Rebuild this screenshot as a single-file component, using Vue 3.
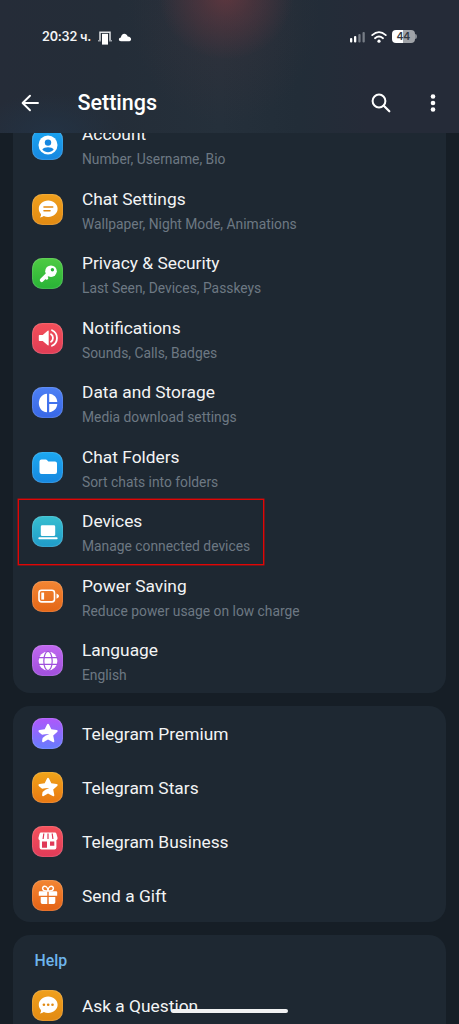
<script setup>
const settings = [
  { icon: 'account', title: 'Account', sub: 'Number, Username, Bio', c: ['#1ba5f0', '#1787e0'] },
  { icon: 'chat', title: 'Chat Settings', sub: 'Wallpaper, Night Mode, Animations', c: ['#f0a01d', '#e28a12'] },
  { icon: 'key', title: 'Privacy & Security', sub: 'Last Seen, Devices, Passkeys', c: ['#4fcb43', '#28b336'] },
  { icon: 'sound', title: 'Notifications', sub: 'Sounds, Calls, Badges', c: ['#f4505a', '#e03c55'] },
  { icon: 'pie', title: 'Data and Storage', sub: 'Media download settings', c: ['#4d80f4', '#3867e6'] },
  { icon: 'folder', title: 'Chat Folders', sub: 'Sort chats into folders', c: ['#1ca8f0', '#1687df'] },
  { icon: 'laptop', title: 'Devices', sub: 'Manage connected devices', c: ['#37bfd0', '#1f9bc9'], marked: true },
  { icon: 'battery', title: 'Power Saving', sub: 'Reduce power usage on low charge', c: ['#f38634', '#e46616'] },
  { icon: 'globe', title: 'Language', sub: 'English', c: ['#c168f0', '#a04fdc'] },
]
const extras = [
  { icon: 'star', title: 'Telegram Premium', c: ['#b057fa', '#667dff'] },
  { icon: 'star', title: 'Telegram Stars', c: ['#f0a51a', '#e97812'] },
  { icon: 'shop', title: 'Telegram Business', c: ['#f5525c', '#e03a58'] },
  { icon: 'gift', title: 'Send a Gift', c: ['#f38634', '#e46214'] },
]
const help = [{ icon: 'question', title: 'Ask a Question', c: ['#f0a01d', '#e28a12'] }]
const groups = [
  { name: 'main', rows: settings },
  { name: 'extra', rows: extras },
  { name: 'help', rows: help, heading: 'Help' },
]
</script>

<template>
  <div class="screen">
    <header class="top">
      <div class="status">
        <span class="clock">20:32 ч.</span>
        <svg class="device" width="14" height="14" viewBox="0 0 14 14">
          <path d="M2 10V1.2h10V10" fill="none" stroke="#dfe2e5" stroke-width="1.5" />
          <path d="M0 9h3v1.4H0zM11 9h3v1.4h-3z" fill="#9ba1a8" />
          <path d="M4 2.8h6v10.8H4z" fill="#fff" />
        </svg>
        <svg class="cloud" width="14" height="9" viewBox="0 0 14 9">
          <path d="M3 8.2C.2 8.2.2 4.9 2.9 4.6 3.2 0 8.4-.5 9.7 3.5 13.8 3.6 14 8.2 11.3 8.2Z" fill="#fff" />
        </svg>
        <svg class="signal" width="17" height="12" viewBox="0 0 17 12">
          <g fill="#fff"><rect x="1" y="7" width="2.3" height="4.5" rx="1" /><rect x="5" y="5" width="2.3" height="6.5" rx="1" /></g>
          <g fill="#777d86"><rect x="9.3" y="3" width="2.3" height="8.5" rx="1" /><rect x="13.5" y="1" width="2.3" height="10.5" rx="1" /></g>
        </svg>
        <svg class="wifi" width="16" height="12" viewBox="0 0 16 12">
          <g fill="none" stroke="#fff" stroke-width="1.8" stroke-linecap="round">
            <path d="M1.2 4.1Q8-1.8 14.8 4.1M4 7.2Q8 3.8 12 7.2" />
          </g>
          <circle cx="8" cy="10.2" r="1.6" fill="#fff" />
        </svg>
        <span class="charge"><b>44</b></span><i class="nub"></i>
      </div>
      <div class="bar">
        <svg class="back" width="18" height="18" viewBox="0 0 18 18">
          <path d="M9 1.7 1.6 9 9 16.3M1.8 9H17" fill="none" stroke="#fff" stroke-width="1.9" stroke-linecap="round" stroke-linejoin="round" />
        </svg>
        <h1>Settings</h1>
        <svg class="search" width="20" height="20" viewBox="0 0 20 20">
          <circle cx="8" cy="8" r="6.4" fill="none" stroke="#fff" stroke-width="2" />
          <path d="m12.8 12.8 5.5 5.5" stroke="#fff" stroke-width="2.2" stroke-linecap="round" />
        </svg>
        <svg class="more" width="6" height="18" viewBox="0 0 6 18">
          <g fill="#fff"><circle cx="3" cy="2.5" r="2.3" /><circle cx="3" cy="9" r="2.3" /><circle cx="3" cy="15.5" r="2.3" /></g>
        </svg>
      </div>
    </header>

    <main class="content">
      <section v-for="g in groups" :key="g.name" class="card" :class="g.name">
        <h2 v-if="g.heading">{{ g.heading }}</h2>
        <div v-for="r in g.rows" :key="r.title" class="row" :class="{ marked: r.marked }">
          <span class="tile" :style="{ background: `linear-gradient(${r.c[0]}, ${r.c[1]})`, color: r.c[1] }">
            <svg width="20" height="20" viewBox="0 0 20 20">
              <g v-if="r.icon === 'account'">
                <circle cx="10" cy="10" r="9.5" fill="#fff" />
                <circle cx="10" cy="7.6" r="3.2" fill="currentColor" />
                <path d="M4.3 14.6c1.8-3.1 9.6-3.1 11.4 0-3 3.5-8.4 3.5-11.4 0Z" fill="currentColor" />
              </g>
              <g v-else-if="r.icon === 'chat' || r.icon === 'question'">
                <path d="M10.2 1.4c5.3 0 9.4 3.7 9.4 8.3s-4.1 8.2-9.4 8.2c-1.7 0-3.1-.3-4.4-.9-1.1.9-2.4 1.4-3.9 1.4 1-1 1.3-2.2 1-3.4C1.5 13.5.8 11.7.8 9.7.8 5.1 4.9 1.4 10.2 1.4Z" fill="#fff" />
                <path v-if="r.icon === 'chat'" d="M6 8h8.7M6 11.7h6" stroke="currentColor" stroke-width="1.6" stroke-linecap="round" />
                <g v-else fill="currentColor"><circle cx="5.9" cy="9.7" r="1.3" /><circle cx="10.2" cy="9.7" r="1.3" /><circle cx="14.5" cy="9.7" r="1.3" /></g>
              </g>
              <g v-else-if="r.icon === 'key'">
                <path d="M12.9 7 3.7 16.2" stroke="#fff" stroke-width="3.8" stroke-linecap="round" />
                <path d="m7 12.8 1.8 1.4" stroke="#fff" stroke-width="3" stroke-linecap="round" />
                <circle cx="13" cy="7.2" r="5.8" fill="#fff" />
                <circle cx="14.4" cy="5.8" r="1.7" fill="currentColor" />
              </g>
              <g v-else-if="r.icon === 'sound'">
                <path d="M1.5 7h3.2l5-4.3q1-.7 1 .5v13.6q0 1.2-1 .5L4.7 13H1.5Q.8 13 .8 12.2V7.8Q.8 7 1.5 7Z" fill="#fff" />
                <path d="M13 6.3c2.6 1.6 2.6 5.8 0 7.4M14 2.2c6.6 3 6.6 12.6 0 15.6" fill="none" stroke="#fff" stroke-width="1.8" stroke-linecap="round" />
              </g>
              <g v-else-if="r.icon === 'pie'" fill="#fff">
                <path d="M9 .7v18.6C-1.8 18.5-1.8 1.5 9 .7ZM11.2.7c4.8.5 7.8 3.7 8.1 8.2h-8.1ZM11.2 11.1h8.1c-.3 4.5-3.3 7.7-8.1 8.2Z" />
              </g>
              <path v-else-if="r.icon === 'folder'" d="M1.5 4.5q0-2 2-2h4.2q1 0 1.7.9l.9 1H17q2 0 2 2v8.7q0 2-2 2H3.5q-2 0-2-2Z" fill="#fff" />
              <g v-else-if="r.icon === 'laptop'" fill="#fff">
                <rect x="2.8" y="3.3" width="14.4" height="10.8" rx="1.4" /><rect x=".4" y="15.3" width="19.2" height="2" rx=".8" />
              </g>
              <g v-else-if="r.icon === 'battery'">
                <rect x="1" y="4.3" width="15.5" height="11.6" rx="2.6" fill="none" stroke="#fff" stroke-width="1.6" />
                <path d="M3.3 6.6h2.8v7H3.3z" fill="#fff" /><path d="M18.5 7.4v5.4q2.6-1 2.6-2.7t-2.6-2.7Z" fill="#fff" />
              </g>
              <g v-else-if="r.icon === 'globe'">
                <circle cx="10" cy="10" r="9.4" fill="#fff" />
                <g fill="none" stroke="currentColor" stroke-width="1.2"><ellipse cx="10" cy="10" rx="4.2" ry="9.6" /><path d="M.3 6.6h19.4M.3 13.4h19.4" /></g>
              </g>
              <path v-else-if="r.icon === 'star'" d="M9 1.6q1-1.7 2 0l2.3 4.7 5.2.7q2 .4.7 1.9l-4 3.7 1.1 5.3q.1 1.9-1.6 1.1L10 16.6l-4.3 2.3q-1.9.8-1.6-1.2l.5-2.7q2.2-2.6 6.7-3.9-3.7-.1-7.2.7L1 9.2Q-.3 7.5 1.6 7l5.1-.7Z" fill="#fff" />
              <g v-else-if="r.icon === 'shop'">
                <path d="M3.2 1.6h13.6q1.4 0 1.7 1.3L19.6 7q0 1.9-1.2 2.2v7.3q0 1.9-1.9 1.9h-13q-1.9 0-1.9-1.9V9.2Q.4 8.9.4 7l1.1-4.1q.3-1.3 1.7-1.3Z" fill="#fff" />
                <path d="m5.8 2.5-.7 5.5M10 2.5v5.5M14.2 2.5l.7 5.5" stroke="currentColor" stroke-width="1.2" />
                <path d="M4 10.5h5v6.2H4zM12 10.5h4.3v4.3H12z" fill="currentColor" />
              </g>
              <g v-else>
                <path d="M1.8 6.2h7.5v4.5H.8V7.2q0-1 1-1ZM10.7 6.2h7.5q1 0 1 1v3.5h-8.5ZM2.7 12h6.6v7H4.4q-1.7 0-1.7-1.7ZM10.7 12h6.6v5.3q0 1.7-1.7 1.7h-4.9Z" fill="#fff" />
                <path d="M10 6C3 6.6 3.9 1.2 6.7 1.3 8.7 1.4 10 3.7 10 6Zm0 0c7 .6 6.1-4.8 3.3-4.7C11.3 1.4 10 3.7 10 6Z" fill="none" stroke="#fff" stroke-width="1.5" />
              </g>
            </svg>
          </span>
          <div class="text">
            <div class="title">{{ r.title }}</div>
            <div v-if="r.sub" class="sub">{{ r.sub }}</div>
          </div>
        </div>
      </section>
    </main>
    <div class="home"></div>
  </div>
</template>

<style>
body { background: #161e26; }
</style>

<style scoped>
* { box-sizing: border-box; }
.screen { position: relative; width: 459px; height: 1024px; overflow: hidden; background: #161e26; font-family: Roboto, sans-serif; color: #f3f4f5; display: flex; flex-direction: column; }
.top {
  flex: none; height: 133px;
  background:
    radial-gradient(ellipse 68px 66px at 226px -6px, rgba(112, 57, 64, .7), rgba(100, 55, 63, .48) 40%, transparent),
    radial-gradient(ellipse 95px 115px at 225px 10px, rgba(70, 52, 60, .35), transparent),
    radial-gradient(ellipse 75px 40px at 50px 133px, rgba(35, 51, 69, .9), transparent),
    linear-gradient(90deg, #252c38 0, #242d38 25%, #25303b 48%, #222d38 65%, #252b38 80%);
}
.status { height: 73px; padding-left: 42px; display: flex; align-items: center; }
.clock { width: 56px; font: 600 12.6px/16px Inter, sans-serif; letter-spacing: -.2px; white-space: nowrap; }
.device { margin-top: 2px; }
.cloud { margin-left: 6px; margin-top: 1px; }
.signal { margin-left: 217px; }
.wifi { margin-left: 5px; }
.charge { margin-left: 5px; width: 22.5px; height: 13px; border-radius: 4px; background: linear-gradient(90deg, #fff 46%, #a0a3a8 46%); color: #333942; text-align: center; }
.charge b { display: block; font: 600 10.5px/14px Inter, sans-serif; letter-spacing: -.2px; }
.nub { width: 2px; height: 5px; margin-left: .5px; border-radius: 0 2px 2px 0; background: #858a91; }
.bar { height: 60px; padding: 0 23px 0 21px; display: flex; align-items: center; }
h1 { margin: 0 auto 0 38.5px; font-size: 21.5px; line-height: 28px; font-weight: 500; color: #fff; }
.more { margin-left: 39px; }
.content { flex: 1; min-height: 0; overflow: hidden; padding: 0 13px; }
.card { background: #1e2832; border-radius: 17px; margin-bottom: 13px; }
.main { margin-top: -21px; }
.row { display: flex; align-items: center; height: 54px; padding-left: 19px; position: relative; }
.main .row { height: 64.56px; }
.tile { width: 31px; height: 31px; margin-top: .6px; flex: none; border-radius: 10.5px; display: flex; align-items: center; justify-content: center; box-shadow: inset 0 0 1.5px rgba(255, 255, 255, .55); }
.tile svg { overflow: visible; }
.text { margin-left: 19px; white-space: nowrap; }
.title { font-size: 17.35px; line-height: 24px; }
.main .text { padding-top: 2.4px; }
.sub { font-size: 13.84px; line-height: 20px; margin-top: 3px; color: #6d7883; }
.extra .text { padding-top: 2px; }
.marked::after { content: ''; position: absolute; box-sizing: border-box; left: 5px; top: -.36px; width: 246px; height: 66px; border: 1px solid #e00606; box-shadow: 0 0 0 .5px #c00808; }
.help { height: 140px; }
h2 { margin: 0; padding: 14px 0 0 21.5px; height: 43px; font-size: 15.8px; line-height: 23px; font-weight: 500; color: #6eb5ec; }
.help .text { padding-top: 3px; }
.home { position: absolute; left: 171px; top: 1009px; width: 117px; height: 4px; border-radius: 2px; background: #f1f2f3; }
</style>
